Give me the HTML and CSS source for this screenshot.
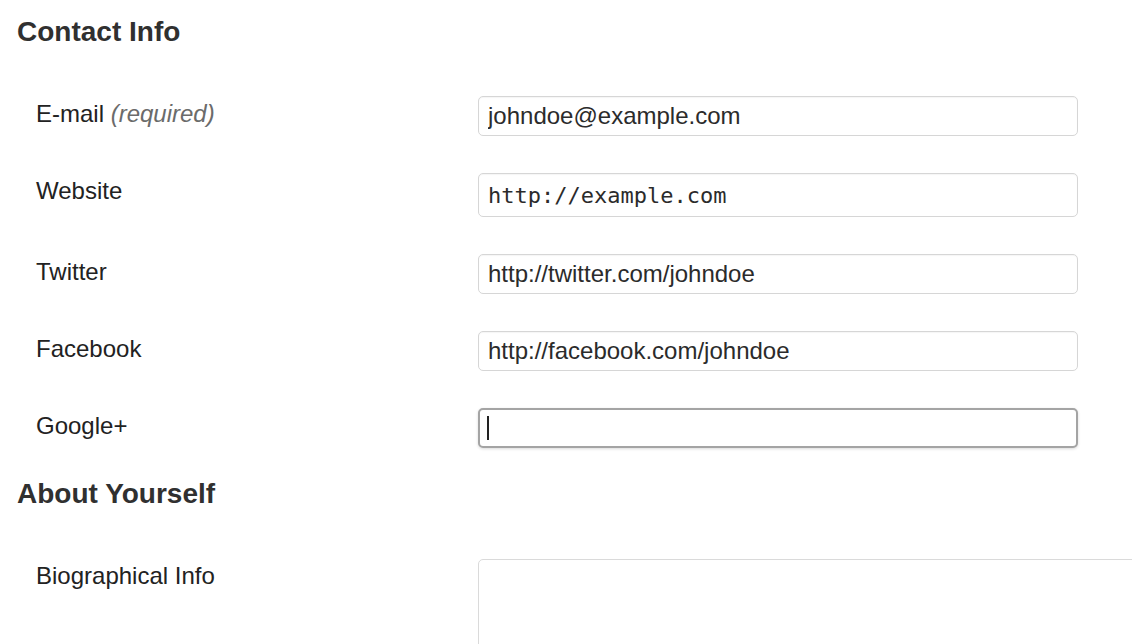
FILE: index.html
```html
<!DOCTYPE html>
<html lang="en">
<head>
<meta charset="utf-8">
<title>Profile</title>
<link rel="stylesheet" href="styles.css">
</head>
<body>
<div class="page">
  <h2 class="section-title">Contact Info</h2>
  <div class="field-list">
    <div class="field-row">
      <label class="field-label" for="email">E-mail <span class="req">(required)</span></label>
      <input class="text-input" id="email" type="text" value="johndoe@example.com">
    </div>
    <div class="field-row">
      <label class="field-label" for="url">Website</label>
      <input class="text-input mono" id="url" type="text" value="http://example.com">
    </div>
    <div class="field-row">
      <label class="field-label" for="twitter">Twitter</label>
      <input class="text-input" id="twitter" type="text" value="http://twitter.com/johndoe">
    </div>
    <div class="field-row">
      <label class="field-label" for="facebook">Facebook</label>
      <input class="text-input" id="facebook" type="text" value="http://facebook.com/johndoe">
    </div>
    <div class="field-row">
      <label class="field-label" for="gplus">Google+</label>
      <div class="input-wrap">
        <input class="text-input is-focused" id="gplus" type="text" value="">
        <span class="caret"></span>
      </div>
    </div>
  </div>

  <h2 class="section-title second">About Yourself</h2>
  <div class="field-list">
    <div class="field-row">
      <label class="field-label bio-label" for="bio">Biographical Info</label>
      <textarea class="bio" id="bio"></textarea>
    </div>
  </div>
</div>
</body>
</html>
```

FILE: styles.css
```css
html, body {
  margin: 0;
  padding: 0;
  background: #ffffff;
  overflow: hidden;
}

body {
  font-family: "Liberation Sans", Arial, sans-serif;
  color: #222222;
}

.page {
  padding-left: 17px;
}

.section-title {
  margin: 16px 0 48px;
  font-size: 28px;
  line-height: 32px;
  font-weight: bold;
  color: #303030;
}

.section-title.second {
  margin-top: 30px;
  margin-bottom: 49px;
}

.field-list {
  display: flex;
  flex-direction: column;
  gap: 37px;
}

.field-row {
  display: flex;
  align-items: flex-start;
  padding-left: 19px;
}

.field-label {
  width: 442px;
  flex: none;
  font-size: 24px;
  line-height: 36px;
  color: #222222;
}

.bio-label {
  line-height: 34px;
}

.req {
  font-style: italic;
  color: #6b6b6b;
}

.text-input {
  box-sizing: border-box;
  width: 600px;
  height: 40px;
  margin: 0;
  padding: 0 9px;
  border: 1px solid #d6d6d6;
  border-radius: 5px;
  background: #ffffff;
  font-family: "Liberation Sans", Arial, sans-serif;
  font-size: 24px;
  color: #2b2b2b;
  outline: none;
  box-shadow: inset 0 1px 1px rgba(0, 0, 0, 0.04);
}

.text-input.mono {
  height: 44px;
  font-family: "DejaVu Sans Mono", "Liberation Mono", monospace;
  font-size: 22px;
}

.text-input.is-focused {
  border: 2px solid #a4a4a4;
  box-shadow: 0 1px 3px rgba(0, 0, 0, 0.15);
}

.input-wrap {
  position: relative;
  width: 600px;
}

.caret {
  position: absolute;
  left: 9px;
  top: 8px;
  width: 2px;
  height: 24px;
  background: #222222;
}

.bio {
  box-sizing: border-box;
  width: 700px;
  height: 200px;
  margin: 0;
  padding: 8px;
  border: 1px solid #dadada;
  border-radius: 5px;
  background: #ffffff;
  resize: none;
  outline: none;
  flex: none;
}
```
